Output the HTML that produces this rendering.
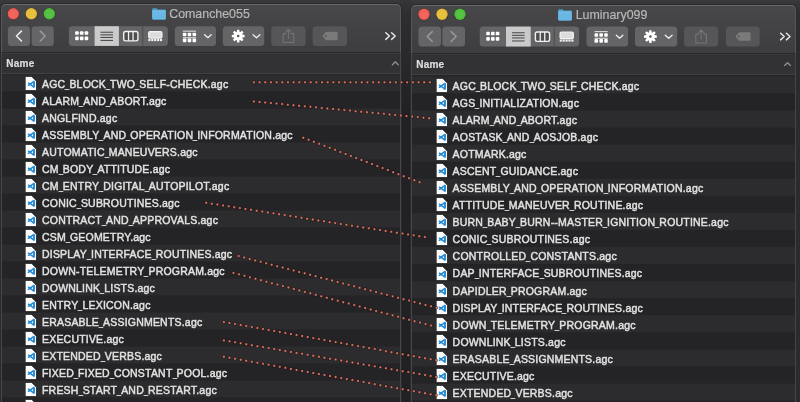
<!DOCTYPE html><html><head><meta charset="utf-8"><style>*{margin:0;padding:0;box-sizing:border-box}
html,body{width:800px;height:402px;overflow:hidden;background:#2a292b;font-family:"Liberation Sans",sans-serif;-webkit-font-smoothing:antialiased}
body{position:relative;will-change:transform}
.abs{position:absolute}
.t{font-size:10.5px;line-height:12px;letter-spacing:0.2px;color:#e2e2e2;white-space:nowrap;-webkit-text-stroke:0.45px #e2e2e2}
.name{font-size:10px;line-height:11px;font-weight:bold;color:#dedede;letter-spacing:0.25px;-webkit-text-stroke:0.2px #dedede;white-space:nowrap}
.t b{font-weight:normal;display:inline-block;transform:scaleX(.68);transform-origin:0 0;margin-right:-2px}
.title{font-size:12.4px;line-height:14px;color:#b8b8b8;-webkit-text-stroke:0.2px #b8b8b8;white-space:nowrap}
</style></head><body><div class="abs" style="left:0;top:0;width:800px;height:402px;background:linear-gradient(#3a393b 0px,#353436 4px,#2e2d30 14px,#2b2a2c 60px)"></div><div class="abs" style="left:400px;top:0;width:12px;height:402px;background:linear-gradient(#363537,#2e2d2f 14px,#2a292b 50px,#212023 110px)"></div><div class="abs" style="left:1px;top:4px;width:400px;height:408px;background:linear-gradient(#484749 0px,#3d3c3e 48px);border-radius:5px 5px 0 0;box-shadow:0 0 0 1px #2a292b"></div><div class="abs" style="left:1px;top:52px;width:400px;height:1px;background:#29282a"></div><div class="abs" style="left:1px;top:53px;width:400px;height:20px;background:#323133"></div><div class="abs" style="left:1px;top:73px;width:400px;height:1px;background:#403f41"></div><div class="abs" style="left:1px;top:53px;width:400px;height:1px;background:#39383a"></div><div class="abs" style="left:1px;top:74px;width:400px;height:402px;background:#242326"></div><svg class="abs" style="left:1px;top:0" width="400" height="402"><rect x="0" y="74.50" width="400" height="17" fill="#2c2b2d"/><rect x="0" y="108.50" width="400" height="17" fill="#2c2b2d"/><rect x="0" y="142.50" width="400" height="17" fill="#2c2b2d"/><rect x="0" y="176.50" width="400" height="17" fill="#2c2b2d"/><rect x="0" y="210.50" width="400" height="17" fill="#2c2b2d"/><rect x="0" y="244.50" width="400" height="17" fill="#2c2b2d"/><rect x="0" y="278.50" width="400" height="17" fill="#2c2b2d"/><rect x="0" y="312.50" width="400" height="17" fill="#2c2b2d"/><rect x="0" y="346.50" width="400" height="17" fill="#2c2b2d"/><rect x="0" y="380.50" width="400" height="17" fill="#2c2b2d"/></svg><div class="abs" style="left:25.3px;top:76.00px"><svg width="12" height="16" viewBox="0 0 12 16"><path d="M0.2 0.4H6.7L11.5 5.3V14.6H0.2Z" fill="#fbfbfb" stroke="#0a0a0a" stroke-width="0.7"/><path d="M8.6 5.6L3.5 9.3M8.6 10.9L3.5 7.2" stroke="#1f88d2" stroke-width="1.55" stroke-linecap="round"/><path d="M9.0 5.7V10.8" stroke="#2b90d8" stroke-width="2.0" stroke-linecap="round"/></svg></div><div class="abs t" style="left:42px;top:77.50px;font-size:10.5px">AGC<b>_</b>BLOCK<b>_</b>TWO<b>_</b>SELF-CHECK.agc</div><div class="abs" style="left:25.3px;top:93.00px"><svg width="12" height="16" viewBox="0 0 12 16"><path d="M0.2 0.4H6.7L11.5 5.3V14.6H0.2Z" fill="#fbfbfb" stroke="#0a0a0a" stroke-width="0.7"/><path d="M8.6 5.6L3.5 9.3M8.6 10.9L3.5 7.2" stroke="#1f88d2" stroke-width="1.55" stroke-linecap="round"/><path d="M9.0 5.7V10.8" stroke="#2b90d8" stroke-width="2.0" stroke-linecap="round"/></svg></div><div class="abs t" style="left:42px;top:94.50px;font-size:10.5px">ALARM<b>_</b>AND<b>_</b>ABORT.agc</div><div class="abs" style="left:25.3px;top:110.00px"><svg width="12" height="16" viewBox="0 0 12 16"><path d="M0.2 0.4H6.7L11.5 5.3V14.6H0.2Z" fill="#fbfbfb" stroke="#0a0a0a" stroke-width="0.7"/><path d="M8.6 5.6L3.5 9.3M8.6 10.9L3.5 7.2" stroke="#1f88d2" stroke-width="1.55" stroke-linecap="round"/><path d="M9.0 5.7V10.8" stroke="#2b90d8" stroke-width="2.0" stroke-linecap="round"/></svg></div><div class="abs t" style="left:42px;top:111.50px;font-size:10.5px">ANGLFIND.agc</div><div class="abs" style="left:25.3px;top:127.00px"><svg width="12" height="16" viewBox="0 0 12 16"><path d="M0.2 0.4H6.7L11.5 5.3V14.6H0.2Z" fill="#fbfbfb" stroke="#0a0a0a" stroke-width="0.7"/><path d="M8.6 5.6L3.5 9.3M8.6 10.9L3.5 7.2" stroke="#1f88d2" stroke-width="1.55" stroke-linecap="round"/><path d="M9.0 5.7V10.8" stroke="#2b90d8" stroke-width="2.0" stroke-linecap="round"/></svg></div><div class="abs t" style="left:42px;top:128.50px;font-size:10.5px">ASSEMBLY<b>_</b>AND<b>_</b>OPERATION<b>_</b>INFORMATION.agc</div><div class="abs" style="left:25.3px;top:144.00px"><svg width="12" height="16" viewBox="0 0 12 16"><path d="M0.2 0.4H6.7L11.5 5.3V14.6H0.2Z" fill="#fbfbfb" stroke="#0a0a0a" stroke-width="0.7"/><path d="M8.6 5.6L3.5 9.3M8.6 10.9L3.5 7.2" stroke="#1f88d2" stroke-width="1.55" stroke-linecap="round"/><path d="M9.0 5.7V10.8" stroke="#2b90d8" stroke-width="2.0" stroke-linecap="round"/></svg></div><div class="abs t" style="left:42px;top:145.50px;font-size:10.5px">AUTOMATIC<b>_</b>MANEUVERS.agc</div><div class="abs" style="left:25.3px;top:161.00px"><svg width="12" height="16" viewBox="0 0 12 16"><path d="M0.2 0.4H6.7L11.5 5.3V14.6H0.2Z" fill="#fbfbfb" stroke="#0a0a0a" stroke-width="0.7"/><path d="M8.6 5.6L3.5 9.3M8.6 10.9L3.5 7.2" stroke="#1f88d2" stroke-width="1.55" stroke-linecap="round"/><path d="M9.0 5.7V10.8" stroke="#2b90d8" stroke-width="2.0" stroke-linecap="round"/></svg></div><div class="abs t" style="left:42px;top:162.50px;font-size:10.5px">CM<b>_</b>BODY<b>_</b>ATTITUDE.agc</div><div class="abs" style="left:25.3px;top:178.00px"><svg width="12" height="16" viewBox="0 0 12 16"><path d="M0.2 0.4H6.7L11.5 5.3V14.6H0.2Z" fill="#fbfbfb" stroke="#0a0a0a" stroke-width="0.7"/><path d="M8.6 5.6L3.5 9.3M8.6 10.9L3.5 7.2" stroke="#1f88d2" stroke-width="1.55" stroke-linecap="round"/><path d="M9.0 5.7V10.8" stroke="#2b90d8" stroke-width="2.0" stroke-linecap="round"/></svg></div><div class="abs t" style="left:42px;top:179.50px;font-size:10.5px">CM<b>_</b>ENTRY<b>_</b>DIGITAL<b>_</b>AUTOPILOT.agc</div><div class="abs" style="left:25.3px;top:195.00px"><svg width="12" height="16" viewBox="0 0 12 16"><path d="M0.2 0.4H6.7L11.5 5.3V14.6H0.2Z" fill="#fbfbfb" stroke="#0a0a0a" stroke-width="0.7"/><path d="M8.6 5.6L3.5 9.3M8.6 10.9L3.5 7.2" stroke="#1f88d2" stroke-width="1.55" stroke-linecap="round"/><path d="M9.0 5.7V10.8" stroke="#2b90d8" stroke-width="2.0" stroke-linecap="round"/></svg></div><div class="abs t" style="left:42px;top:196.50px;font-size:10.5px">CONIC<b>_</b>SUBROUTINES.agc</div><div class="abs" style="left:25.3px;top:212.00px"><svg width="12" height="16" viewBox="0 0 12 16"><path d="M0.2 0.4H6.7L11.5 5.3V14.6H0.2Z" fill="#fbfbfb" stroke="#0a0a0a" stroke-width="0.7"/><path d="M8.6 5.6L3.5 9.3M8.6 10.9L3.5 7.2" stroke="#1f88d2" stroke-width="1.55" stroke-linecap="round"/><path d="M9.0 5.7V10.8" stroke="#2b90d8" stroke-width="2.0" stroke-linecap="round"/></svg></div><div class="abs t" style="left:42px;top:213.50px;font-size:10.5px">CONTRACT<b>_</b>AND<b>_</b>APPROVALS.agc</div><div class="abs" style="left:25.3px;top:229.00px"><svg width="12" height="16" viewBox="0 0 12 16"><path d="M0.2 0.4H6.7L11.5 5.3V14.6H0.2Z" fill="#fbfbfb" stroke="#0a0a0a" stroke-width="0.7"/><path d="M8.6 5.6L3.5 9.3M8.6 10.9L3.5 7.2" stroke="#1f88d2" stroke-width="1.55" stroke-linecap="round"/><path d="M9.0 5.7V10.8" stroke="#2b90d8" stroke-width="2.0" stroke-linecap="round"/></svg></div><div class="abs t" style="left:42px;top:230.50px;font-size:10.5px">CSM<b>_</b>GEOMETRY.agc</div><div class="abs" style="left:25.3px;top:246.00px"><svg width="12" height="16" viewBox="0 0 12 16"><path d="M0.2 0.4H6.7L11.5 5.3V14.6H0.2Z" fill="#fbfbfb" stroke="#0a0a0a" stroke-width="0.7"/><path d="M8.6 5.6L3.5 9.3M8.6 10.9L3.5 7.2" stroke="#1f88d2" stroke-width="1.55" stroke-linecap="round"/><path d="M9.0 5.7V10.8" stroke="#2b90d8" stroke-width="2.0" stroke-linecap="round"/></svg></div><div class="abs t" style="left:42px;top:247.50px;font-size:10.5px">DISPLAY<b>_</b>INTERFACE<b>_</b>ROUTINES.agc</div><div class="abs" style="left:25.3px;top:263.00px"><svg width="12" height="16" viewBox="0 0 12 16"><path d="M0.2 0.4H6.7L11.5 5.3V14.6H0.2Z" fill="#fbfbfb" stroke="#0a0a0a" stroke-width="0.7"/><path d="M8.6 5.6L3.5 9.3M8.6 10.9L3.5 7.2" stroke="#1f88d2" stroke-width="1.55" stroke-linecap="round"/><path d="M9.0 5.7V10.8" stroke="#2b90d8" stroke-width="2.0" stroke-linecap="round"/></svg></div><div class="abs t" style="left:42px;top:264.50px;font-size:10.5px">DOWN-TELEMETRY<b>_</b>PROGRAM.agc</div><div class="abs" style="left:25.3px;top:280.00px"><svg width="12" height="16" viewBox="0 0 12 16"><path d="M0.2 0.4H6.7L11.5 5.3V14.6H0.2Z" fill="#fbfbfb" stroke="#0a0a0a" stroke-width="0.7"/><path d="M8.6 5.6L3.5 9.3M8.6 10.9L3.5 7.2" stroke="#1f88d2" stroke-width="1.55" stroke-linecap="round"/><path d="M9.0 5.7V10.8" stroke="#2b90d8" stroke-width="2.0" stroke-linecap="round"/></svg></div><div class="abs t" style="left:42px;top:281.50px;font-size:10.5px">DOWNLINK<b>_</b>LISTS.agc</div><div class="abs" style="left:25.3px;top:297.00px"><svg width="12" height="16" viewBox="0 0 12 16"><path d="M0.2 0.4H6.7L11.5 5.3V14.6H0.2Z" fill="#fbfbfb" stroke="#0a0a0a" stroke-width="0.7"/><path d="M8.6 5.6L3.5 9.3M8.6 10.9L3.5 7.2" stroke="#1f88d2" stroke-width="1.55" stroke-linecap="round"/><path d="M9.0 5.7V10.8" stroke="#2b90d8" stroke-width="2.0" stroke-linecap="round"/></svg></div><div class="abs t" style="left:42px;top:298.50px;font-size:10.5px">ENTRY<b>_</b>LEXICON.agc</div><div class="abs" style="left:25.3px;top:314.00px"><svg width="12" height="16" viewBox="0 0 12 16"><path d="M0.2 0.4H6.7L11.5 5.3V14.6H0.2Z" fill="#fbfbfb" stroke="#0a0a0a" stroke-width="0.7"/><path d="M8.6 5.6L3.5 9.3M8.6 10.9L3.5 7.2" stroke="#1f88d2" stroke-width="1.55" stroke-linecap="round"/><path d="M9.0 5.7V10.8" stroke="#2b90d8" stroke-width="2.0" stroke-linecap="round"/></svg></div><div class="abs t" style="left:42px;top:315.50px;font-size:10.5px">ERASABLE<b>_</b>ASSIGNMENTS.agc</div><div class="abs" style="left:25.3px;top:331.00px"><svg width="12" height="16" viewBox="0 0 12 16"><path d="M0.2 0.4H6.7L11.5 5.3V14.6H0.2Z" fill="#fbfbfb" stroke="#0a0a0a" stroke-width="0.7"/><path d="M8.6 5.6L3.5 9.3M8.6 10.9L3.5 7.2" stroke="#1f88d2" stroke-width="1.55" stroke-linecap="round"/><path d="M9.0 5.7V10.8" stroke="#2b90d8" stroke-width="2.0" stroke-linecap="round"/></svg></div><div class="abs t" style="left:42px;top:332.50px;font-size:10.5px">EXECUTIVE.agc</div><div class="abs" style="left:25.3px;top:348.00px"><svg width="12" height="16" viewBox="0 0 12 16"><path d="M0.2 0.4H6.7L11.5 5.3V14.6H0.2Z" fill="#fbfbfb" stroke="#0a0a0a" stroke-width="0.7"/><path d="M8.6 5.6L3.5 9.3M8.6 10.9L3.5 7.2" stroke="#1f88d2" stroke-width="1.55" stroke-linecap="round"/><path d="M9.0 5.7V10.8" stroke="#2b90d8" stroke-width="2.0" stroke-linecap="round"/></svg></div><div class="abs t" style="left:42px;top:349.50px;font-size:10.5px">EXTENDED<b>_</b>VERBS.agc</div><div class="abs" style="left:25.3px;top:365.00px"><svg width="12" height="16" viewBox="0 0 12 16"><path d="M0.2 0.4H6.7L11.5 5.3V14.6H0.2Z" fill="#fbfbfb" stroke="#0a0a0a" stroke-width="0.7"/><path d="M8.6 5.6L3.5 9.3M8.6 10.9L3.5 7.2" stroke="#1f88d2" stroke-width="1.55" stroke-linecap="round"/><path d="M9.0 5.7V10.8" stroke="#2b90d8" stroke-width="2.0" stroke-linecap="round"/></svg></div><div class="abs t" style="left:42px;top:366.50px;font-size:10.5px">FIXED<b>_</b>FIXED<b>_</b>CONSTANT<b>_</b>POOL.agc</div><div class="abs" style="left:25.3px;top:382.00px"><svg width="12" height="16" viewBox="0 0 12 16"><path d="M0.2 0.4H6.7L11.5 5.3V14.6H0.2Z" fill="#fbfbfb" stroke="#0a0a0a" stroke-width="0.7"/><path d="M8.6 5.6L3.5 9.3M8.6 10.9L3.5 7.2" stroke="#1f88d2" stroke-width="1.55" stroke-linecap="round"/><path d="M9.0 5.7V10.8" stroke="#2b90d8" stroke-width="2.0" stroke-linecap="round"/></svg></div><div class="abs t" style="left:42px;top:383.50px;font-size:10.5px">FRESH<b>_</b>START<b>_</b>AND<b>_</b>RESTART.agc</div><div class="abs" style="left:25.3px;top:399.00px"><svg width="12" height="16" viewBox="0 0 12 16"><path d="M0.2 0.4H6.7L11.5 5.3V14.6H0.2Z" fill="#fbfbfb" stroke="#0a0a0a" stroke-width="0.7"/><path d="M8.6 5.6L3.5 9.3M8.6 10.9L3.5 7.2" stroke="#1f88d2" stroke-width="1.55" stroke-linecap="round"/><path d="M9.0 5.7V10.8" stroke="#2b90d8" stroke-width="2.0" stroke-linecap="round"/></svg></div><div class="abs t" style="left:42px;top:400.50px;font-size:10.5px">GIMBAL<b>_</b>LOCK<b>_</b>AVOIDANCE.agc</div><div class="abs name" style="left:6.3px;top:57.5px">Name</div><svg class="abs" style="left:0;top:0" width="800" height="30"><circle cx="13.3" cy="13.8" r="6.1" fill="rgba(20,18,20,0.45)"/><circle cx="13.3" cy="13.8" r="5.7" fill="#f05a54"/><circle cx="13.3" cy="14.100000000000001" r="4" fill="#f36d66" opacity="0.6"/><circle cx="31.3" cy="13.8" r="6.1" fill="rgba(20,18,20,0.45)"/><circle cx="31.3" cy="13.8" r="5.7" fill="#e6bb36"/><circle cx="31.3" cy="14.100000000000001" r="4" fill="#ebc449" opacity="0.6"/><circle cx="49.3" cy="13.8" r="6.1" fill="rgba(20,18,20,0.45)"/><circle cx="49.3" cy="13.8" r="5.7" fill="#4dbd3a"/><circle cx="49.3" cy="14.100000000000001" r="4" fill="#5cc64a" opacity="0.6"/></svg><svg class="abs" style="left:151.6px;top:8.1px" width="14" height="12" viewBox="0 0 14 12"><path d="M0.2 1.0Q0.2 0.2 1.0 0.2H4.6L5.8 1.4H13.0Q13.8 1.4 13.8 2.2V10.6Q13.8 11.4 13.0 11.4H1.0Q0.2 11.4 0.2 10.6Z" fill="#4d9dca"/><path d="M0.2 3.4Q0.2 2.5 1.0 2.5H13.0Q13.8 2.5 13.8 3.3V10.6Q13.8 11.4 13.0 11.4H1.0Q0.2 11.4 0.2 10.6Z" fill="#68b8e3"/><path d="M0.4 3.0H13.6" stroke="#86c9ee" stroke-width="0.6"/></svg><div class="abs title" style="left:169.2px;top:7px">Comanche055</div><svg class="abs" style="left:0;top:0" width="800" height="80"><rect x="7.9" y="26.2" width="22.1" height="19.7" rx="3.5" fill="#656466" /><rect x="31.6" y="26.2" width="22.199999999999996" height="19.7" rx="3.5" fill="#656466" /><path d="M21.45 31.15 L16.45 36.05 L21.45 40.949999999999996" fill="none" stroke="#eeeeee" stroke-width="1.5" stroke-linecap="round" stroke-linejoin="round"/><path d="M40.2 31.15 L45.2 36.05 L40.2 40.949999999999996" fill="none" stroke="#9a9a9a" stroke-width="1.5" stroke-linecap="round" stroke-linejoin="round"/><rect x="68.9" y="26.2" width="99.0" height="19.7" rx="3.5" fill="#656466" /><rect x="94.6" y="26.2" width="24.30000000000001" height="19.7" fill="#cacaca"/><rect x="142.2" y="26.2" width="1" height="19.7" fill="#4e4e4e"/><rect x="75.15" y="31.249999999999996" width="3.5999999999999943" height="3.599999999999998" rx="0.9" fill="#ffffff" /><rect x="79.9" y="31.249999999999996" width="3.5999999999999943" height="3.599999999999998" rx="0.9" fill="#ffffff" /><rect x="84.65" y="31.249999999999996" width="3.5999999999999943" height="3.599999999999998" rx="0.9" fill="#ffffff" /><rect x="75.15" y="36.55" width="3.5999999999999943" height="3.6000000000000014" rx="0.9" fill="#ffffff" /><rect x="79.9" y="36.55" width="3.5999999999999943" height="3.6000000000000014" rx="0.9" fill="#ffffff" /><rect x="84.65" y="36.55" width="3.5999999999999943" height="3.6000000000000014" rx="0.9" fill="#ffffff" /><rect x="100.45" y="31.7" width="12.6" height="1.1" fill="#505050"/><rect x="100.45" y="34.3" width="12.6" height="1.1" fill="#505050"/><rect x="100.45" y="36.9" width="12.6" height="1.1" fill="#505050"/><rect x="100.45" y="39.9" width="12.6" height="1.1" fill="#505050"/><rect x="123.70000000000002" y="31.449999999999996" width="14.2" height="9.4" rx="1.8" fill="#4e4e4e" stroke="#f2f2f2" stroke-width="1.4"/><rect x="127.9" y="31.449999999999996" width="1.3" height="9.4" fill="#f2f2f2"/><rect x="132.4" y="31.449999999999996" width="1.3" height="9.4" fill="#f2f2f2"/><rect x="148.70000000000002" y="31.65" width="13.2" height="6.4" rx="1.3" fill="#dcdcdc" stroke="#f2f2f2" stroke-width="1.3"/><rect x="148.3" y="38.949999999999996" width="2.2" height="2.2" fill="#f2f2f2"/><rect x="151.20000000000002" y="38.949999999999996" width="2.2" height="2.2" fill="#f2f2f2"/><rect x="154.10000000000002" y="38.949999999999996" width="2.2" height="2.2" fill="#f2f2f2"/><rect x="157.0" y="38.949999999999996" width="2.2" height="2.2" fill="#f2f2f2"/><rect x="159.9" y="38.949999999999996" width="2.2" height="2.2" fill="#f2f2f2"/><rect x="174.8" y="26.2" width="41.19999999999999" height="19.7" rx="3.5" fill="#656466" /><rect x="182.8" y="30.65" width="13.2" height="1" fill="#e8e8e8"/><rect x="182.8" y="37.25" width="13.2" height="1" fill="#e8e8e8"/><rect x="182.8" y="32.65" width="3.5999999999999943" height="3.6000000000000014" rx="0.9" fill="#ffffff" /><rect x="187.65" y="32.65" width="3.5999999999999943" height="3.6000000000000014" rx="0.9" fill="#ffffff" /><rect x="192.5" y="32.65" width="3.5999999999999943" height="3.6000000000000014" rx="0.9" fill="#ffffff" /><rect x="182.8" y="38.55" width="3.5999999999999943" height="3.6000000000000014" rx="0.9" fill="#ffffff" /><rect x="187.65" y="38.55" width="3.5999999999999943" height="3.6000000000000014" rx="0.9" fill="#ffffff" /><rect x="192.5" y="38.55" width="3.5999999999999943" height="3.6000000000000014" rx="0.9" fill="#ffffff" /><path d="M204.60000000000002 34.65 L207.9 37.65 L211.20000000000002 34.65" fill="none" stroke="#f0f0f0" stroke-width="1.3" stroke-linecap="round" stroke-linejoin="round"/><rect x="222.8" y="26.2" width="41.39999999999998" height="19.7" rx="3.5" fill="#656466" /><path d="M237.10 29.64 L239.30 29.64 L239.63 32.00 L240.05 32.17 L241.95 30.74 L243.51 32.30 L242.08 34.20 L242.25 34.62 L244.61 34.95 L244.61 37.15 L242.25 37.48 L242.08 37.90 L243.51 39.80 L241.95 41.36 L240.05 39.93 L239.63 40.10 L239.30 42.46 L237.10 42.46 L236.77 40.10 L236.35 39.93 L234.45 41.36 L232.89 39.80 L234.32 37.90 L234.15 37.48 L231.79 37.15 L231.79 34.95 L234.15 34.62 L234.32 34.20 L232.89 32.30 L234.45 30.74 L236.35 32.17 L236.77 32.00Z" fill="#ffffff"/><circle cx="238.20000000000002" cy="36.05" r="1.2" fill="#505050"/><path d="M253.10000000000002 34.75 L256.5 37.75 L259.90000000000003 34.75" fill="none" stroke="#f0f0f0" stroke-width="1.3" stroke-linecap="round" stroke-linejoin="round"/><rect x="271.2" y="26.2" width="34.400000000000034" height="19.7" rx="3.5" fill="#565557" /><path d="M286.0 33.65H283.09999999999997V42.449999999999996H293.7V33.65H290.79999999999995" fill="none" stroke="#747474" stroke-width="1.1" stroke-linejoin="round"/><path d="M288.4 29.449999999999996V38.55 M285.79999999999995 32.05L288.4 29.449999999999996L291.0 32.05" fill="none" stroke="#747474" stroke-width="1.1" stroke-linecap="round" stroke-linejoin="round"/><rect x="312.6" y="26.2" width="34.39999999999998" height="19.7" rx="3.5" fill="#565557" /><path d="M322.3 36.05L326.0 31.849999999999998H336.6Q337.6 31.849999999999998 337.6 32.849999999999994V39.25Q337.6 40.25 336.6 40.25H326.0Z" fill="#7a7a7a"/><circle cx="325.8" cy="36.05" r="1" fill="#565557"/><path d="M385.8 32.75 L389.40000000000003 36.05 L385.8 39.349999999999994" fill="none" stroke="#e6e6e6" stroke-width="1.5" stroke-linecap="round" stroke-linejoin="round"/><path d="M391.6 32.75 L395.20000000000005 36.05 L391.6 39.349999999999994" fill="none" stroke="#e6e6e6" stroke-width="1.5" stroke-linecap="round" stroke-linejoin="round"/><path d="M392.40000000000003 64.7 L395.3 61.800000000000004 L398.2 64.7" fill="none" stroke="#8c8b8d" stroke-width="1.4" stroke-linecap="round" stroke-linejoin="round"/></svg><div class="abs" style="left:1px;top:4px;width:400px;height:48px;border:1px solid #58575a;border-top-color:#67666a;border-bottom:none;border-radius:5px 5px 0 0"></div><div class="abs" style="left:1px;top:52px;width:400px;height:360px;border-left:1px solid #464548;border-right:1px solid #464548"></div><div class="abs" style="left:411px;top:4.5px;width:385px;height:407.5px;background:linear-gradient(#484749 0px,#3d3c3e 48px);border-radius:5px 5px 0 0;box-shadow:0 0 0 1px #2a292b"></div><div class="abs" style="left:411px;top:53.3px;width:385px;height:1px;background:#29282a"></div><div class="abs" style="left:411px;top:54.3px;width:385px;height:19.700000000000003px;background:#323133"></div><div class="abs" style="left:411px;top:74px;width:385px;height:1px;background:#403f41"></div><div class="abs" style="left:411px;top:54.3px;width:385px;height:1px;background:#39383a"></div><div class="abs" style="left:411px;top:75px;width:385px;height:402px;background:#242326"></div><svg class="abs" style="left:411px;top:0" width="385" height="402"><rect x="0" y="76.40" width="385" height="17.06" fill="#2c2b2d"/><rect x="0" y="110.52" width="385" height="17.06" fill="#2c2b2d"/><rect x="0" y="144.64" width="385" height="17.06" fill="#2c2b2d"/><rect x="0" y="178.76" width="385" height="17.06" fill="#2c2b2d"/><rect x="0" y="212.88" width="385" height="17.06" fill="#2c2b2d"/><rect x="0" y="247.00" width="385" height="17.06" fill="#2c2b2d"/><rect x="0" y="281.12" width="385" height="17.06" fill="#2c2b2d"/><rect x="0" y="315.24" width="385" height="17.06" fill="#2c2b2d"/><rect x="0" y="349.36" width="385" height="17.06" fill="#2c2b2d"/><rect x="0" y="383.48" width="385" height="17.06" fill="#2c2b2d"/></svg><div class="abs" style="left:435.8px;top:77.90px"><svg width="12" height="16" viewBox="0 0 12 16"><path d="M0.2 0.4H6.7L11.5 5.3V14.6H0.2Z" fill="#fbfbfb" stroke="#0a0a0a" stroke-width="0.7"/><path d="M8.6 5.6L3.5 9.3M8.6 10.9L3.5 7.2" stroke="#1f88d2" stroke-width="1.55" stroke-linecap="round"/><path d="M9.0 5.7V10.8" stroke="#2b90d8" stroke-width="2.0" stroke-linecap="round"/></svg></div><div class="abs t" style="left:452.6px;top:79.80px;font-size:10.5px">AGC<b>_</b>BLOCK<b>_</b>TWO<b>_</b>SELF<b>_</b>CHECK.agc</div><div class="abs" style="left:435.8px;top:94.96px"><svg width="12" height="16" viewBox="0 0 12 16"><path d="M0.2 0.4H6.7L11.5 5.3V14.6H0.2Z" fill="#fbfbfb" stroke="#0a0a0a" stroke-width="0.7"/><path d="M8.6 5.6L3.5 9.3M8.6 10.9L3.5 7.2" stroke="#1f88d2" stroke-width="1.55" stroke-linecap="round"/><path d="M9.0 5.7V10.8" stroke="#2b90d8" stroke-width="2.0" stroke-linecap="round"/></svg></div><div class="abs t" style="left:452.6px;top:96.86px;font-size:10.5px">AGS<b>_</b>INITIALIZATION.agc</div><div class="abs" style="left:435.8px;top:112.02px"><svg width="12" height="16" viewBox="0 0 12 16"><path d="M0.2 0.4H6.7L11.5 5.3V14.6H0.2Z" fill="#fbfbfb" stroke="#0a0a0a" stroke-width="0.7"/><path d="M8.6 5.6L3.5 9.3M8.6 10.9L3.5 7.2" stroke="#1f88d2" stroke-width="1.55" stroke-linecap="round"/><path d="M9.0 5.7V10.8" stroke="#2b90d8" stroke-width="2.0" stroke-linecap="round"/></svg></div><div class="abs t" style="left:452.6px;top:113.92px;font-size:10.5px">ALARM<b>_</b>AND<b>_</b>ABORT.agc</div><div class="abs" style="left:435.8px;top:129.08px"><svg width="12" height="16" viewBox="0 0 12 16"><path d="M0.2 0.4H6.7L11.5 5.3V14.6H0.2Z" fill="#fbfbfb" stroke="#0a0a0a" stroke-width="0.7"/><path d="M8.6 5.6L3.5 9.3M8.6 10.9L3.5 7.2" stroke="#1f88d2" stroke-width="1.55" stroke-linecap="round"/><path d="M9.0 5.7V10.8" stroke="#2b90d8" stroke-width="2.0" stroke-linecap="round"/></svg></div><div class="abs t" style="left:452.6px;top:130.98px;font-size:10.5px">AOSTASK<b>_</b>AND<b>_</b>AOSJOB.agc</div><div class="abs" style="left:435.8px;top:146.14px"><svg width="12" height="16" viewBox="0 0 12 16"><path d="M0.2 0.4H6.7L11.5 5.3V14.6H0.2Z" fill="#fbfbfb" stroke="#0a0a0a" stroke-width="0.7"/><path d="M8.6 5.6L3.5 9.3M8.6 10.9L3.5 7.2" stroke="#1f88d2" stroke-width="1.55" stroke-linecap="round"/><path d="M9.0 5.7V10.8" stroke="#2b90d8" stroke-width="2.0" stroke-linecap="round"/></svg></div><div class="abs t" style="left:452.6px;top:148.04px;font-size:10.5px">AOTMARK.agc</div><div class="abs" style="left:435.8px;top:163.20px"><svg width="12" height="16" viewBox="0 0 12 16"><path d="M0.2 0.4H6.7L11.5 5.3V14.6H0.2Z" fill="#fbfbfb" stroke="#0a0a0a" stroke-width="0.7"/><path d="M8.6 5.6L3.5 9.3M8.6 10.9L3.5 7.2" stroke="#1f88d2" stroke-width="1.55" stroke-linecap="round"/><path d="M9.0 5.7V10.8" stroke="#2b90d8" stroke-width="2.0" stroke-linecap="round"/></svg></div><div class="abs t" style="left:452.6px;top:165.10px;font-size:10.5px">ASCENT<b>_</b>GUIDANCE.agc</div><div class="abs" style="left:435.8px;top:180.26px"><svg width="12" height="16" viewBox="0 0 12 16"><path d="M0.2 0.4H6.7L11.5 5.3V14.6H0.2Z" fill="#fbfbfb" stroke="#0a0a0a" stroke-width="0.7"/><path d="M8.6 5.6L3.5 9.3M8.6 10.9L3.5 7.2" stroke="#1f88d2" stroke-width="1.55" stroke-linecap="round"/><path d="M9.0 5.7V10.8" stroke="#2b90d8" stroke-width="2.0" stroke-linecap="round"/></svg></div><div class="abs t" style="left:452.6px;top:182.16px;font-size:10.5px">ASSEMBLY<b>_</b>AND<b>_</b>OPERATION<b>_</b>INFORMATION.agc</div><div class="abs" style="left:435.8px;top:197.32px"><svg width="12" height="16" viewBox="0 0 12 16"><path d="M0.2 0.4H6.7L11.5 5.3V14.6H0.2Z" fill="#fbfbfb" stroke="#0a0a0a" stroke-width="0.7"/><path d="M8.6 5.6L3.5 9.3M8.6 10.9L3.5 7.2" stroke="#1f88d2" stroke-width="1.55" stroke-linecap="round"/><path d="M9.0 5.7V10.8" stroke="#2b90d8" stroke-width="2.0" stroke-linecap="round"/></svg></div><div class="abs t" style="left:452.6px;top:199.22px;font-size:10.5px">ATTITUDE<b>_</b>MANEUVER<b>_</b>ROUTINE.agc</div><div class="abs" style="left:435.8px;top:214.38px"><svg width="12" height="16" viewBox="0 0 12 16"><path d="M0.2 0.4H6.7L11.5 5.3V14.6H0.2Z" fill="#fbfbfb" stroke="#0a0a0a" stroke-width="0.7"/><path d="M8.6 5.6L3.5 9.3M8.6 10.9L3.5 7.2" stroke="#1f88d2" stroke-width="1.55" stroke-linecap="round"/><path d="M9.0 5.7V10.8" stroke="#2b90d8" stroke-width="2.0" stroke-linecap="round"/></svg></div><div class="abs t" style="left:452.6px;top:216.28px;font-size:10.5px">BURN<b>_</b>BABY<b>_</b>BURN--MASTER<b>_</b>IGNITION<b>_</b>ROUTINE.agc</div><div class="abs" style="left:435.8px;top:231.44px"><svg width="12" height="16" viewBox="0 0 12 16"><path d="M0.2 0.4H6.7L11.5 5.3V14.6H0.2Z" fill="#fbfbfb" stroke="#0a0a0a" stroke-width="0.7"/><path d="M8.6 5.6L3.5 9.3M8.6 10.9L3.5 7.2" stroke="#1f88d2" stroke-width="1.55" stroke-linecap="round"/><path d="M9.0 5.7V10.8" stroke="#2b90d8" stroke-width="2.0" stroke-linecap="round"/></svg></div><div class="abs t" style="left:452.6px;top:233.34px;font-size:10.5px">CONIC<b>_</b>SUBROUTINES.agc</div><div class="abs" style="left:435.8px;top:248.50px"><svg width="12" height="16" viewBox="0 0 12 16"><path d="M0.2 0.4H6.7L11.5 5.3V14.6H0.2Z" fill="#fbfbfb" stroke="#0a0a0a" stroke-width="0.7"/><path d="M8.6 5.6L3.5 9.3M8.6 10.9L3.5 7.2" stroke="#1f88d2" stroke-width="1.55" stroke-linecap="round"/><path d="M9.0 5.7V10.8" stroke="#2b90d8" stroke-width="2.0" stroke-linecap="round"/></svg></div><div class="abs t" style="left:452.6px;top:250.40px;font-size:10.5px">CONTROLLED<b>_</b>CONSTANTS.agc</div><div class="abs" style="left:435.8px;top:265.56px"><svg width="12" height="16" viewBox="0 0 12 16"><path d="M0.2 0.4H6.7L11.5 5.3V14.6H0.2Z" fill="#fbfbfb" stroke="#0a0a0a" stroke-width="0.7"/><path d="M8.6 5.6L3.5 9.3M8.6 10.9L3.5 7.2" stroke="#1f88d2" stroke-width="1.55" stroke-linecap="round"/><path d="M9.0 5.7V10.8" stroke="#2b90d8" stroke-width="2.0" stroke-linecap="round"/></svg></div><div class="abs t" style="left:452.6px;top:267.46px;font-size:10.5px">DAP<b>_</b>INTERFACE<b>_</b>SUBROUTINES.agc</div><div class="abs" style="left:435.8px;top:282.62px"><svg width="12" height="16" viewBox="0 0 12 16"><path d="M0.2 0.4H6.7L11.5 5.3V14.6H0.2Z" fill="#fbfbfb" stroke="#0a0a0a" stroke-width="0.7"/><path d="M8.6 5.6L3.5 9.3M8.6 10.9L3.5 7.2" stroke="#1f88d2" stroke-width="1.55" stroke-linecap="round"/><path d="M9.0 5.7V10.8" stroke="#2b90d8" stroke-width="2.0" stroke-linecap="round"/></svg></div><div class="abs t" style="left:452.6px;top:284.52px;font-size:10.5px">DAPIDLER<b>_</b>PROGRAM.agc</div><div class="abs" style="left:435.8px;top:299.68px"><svg width="12" height="16" viewBox="0 0 12 16"><path d="M0.2 0.4H6.7L11.5 5.3V14.6H0.2Z" fill="#fbfbfb" stroke="#0a0a0a" stroke-width="0.7"/><path d="M8.6 5.6L3.5 9.3M8.6 10.9L3.5 7.2" stroke="#1f88d2" stroke-width="1.55" stroke-linecap="round"/><path d="M9.0 5.7V10.8" stroke="#2b90d8" stroke-width="2.0" stroke-linecap="round"/></svg></div><div class="abs t" style="left:452.6px;top:301.58px;font-size:10.5px">DISPLAY<b>_</b>INTERFACE<b>_</b>ROUTINES.agc</div><div class="abs" style="left:435.8px;top:316.74px"><svg width="12" height="16" viewBox="0 0 12 16"><path d="M0.2 0.4H6.7L11.5 5.3V14.6H0.2Z" fill="#fbfbfb" stroke="#0a0a0a" stroke-width="0.7"/><path d="M8.6 5.6L3.5 9.3M8.6 10.9L3.5 7.2" stroke="#1f88d2" stroke-width="1.55" stroke-linecap="round"/><path d="M9.0 5.7V10.8" stroke="#2b90d8" stroke-width="2.0" stroke-linecap="round"/></svg></div><div class="abs t" style="left:452.6px;top:318.64px;font-size:10.5px">DOWN<b>_</b>TELEMETRY<b>_</b>PROGRAM.agc</div><div class="abs" style="left:435.8px;top:333.80px"><svg width="12" height="16" viewBox="0 0 12 16"><path d="M0.2 0.4H6.7L11.5 5.3V14.6H0.2Z" fill="#fbfbfb" stroke="#0a0a0a" stroke-width="0.7"/><path d="M8.6 5.6L3.5 9.3M8.6 10.9L3.5 7.2" stroke="#1f88d2" stroke-width="1.55" stroke-linecap="round"/><path d="M9.0 5.7V10.8" stroke="#2b90d8" stroke-width="2.0" stroke-linecap="round"/></svg></div><div class="abs t" style="left:452.6px;top:335.70px;font-size:10.5px">DOWNLINK<b>_</b>LISTS.agc</div><div class="abs" style="left:435.8px;top:350.86px"><svg width="12" height="16" viewBox="0 0 12 16"><path d="M0.2 0.4H6.7L11.5 5.3V14.6H0.2Z" fill="#fbfbfb" stroke="#0a0a0a" stroke-width="0.7"/><path d="M8.6 5.6L3.5 9.3M8.6 10.9L3.5 7.2" stroke="#1f88d2" stroke-width="1.55" stroke-linecap="round"/><path d="M9.0 5.7V10.8" stroke="#2b90d8" stroke-width="2.0" stroke-linecap="round"/></svg></div><div class="abs t" style="left:452.6px;top:352.76px;font-size:10.5px">ERASABLE<b>_</b>ASSIGNMENTS.agc</div><div class="abs" style="left:435.8px;top:367.92px"><svg width="12" height="16" viewBox="0 0 12 16"><path d="M0.2 0.4H6.7L11.5 5.3V14.6H0.2Z" fill="#fbfbfb" stroke="#0a0a0a" stroke-width="0.7"/><path d="M8.6 5.6L3.5 9.3M8.6 10.9L3.5 7.2" stroke="#1f88d2" stroke-width="1.55" stroke-linecap="round"/><path d="M9.0 5.7V10.8" stroke="#2b90d8" stroke-width="2.0" stroke-linecap="round"/></svg></div><div class="abs t" style="left:452.6px;top:369.82px;font-size:10.5px">EXECUTIVE.agc</div><div class="abs" style="left:435.8px;top:384.98px"><svg width="12" height="16" viewBox="0 0 12 16"><path d="M0.2 0.4H6.7L11.5 5.3V14.6H0.2Z" fill="#fbfbfb" stroke="#0a0a0a" stroke-width="0.7"/><path d="M8.6 5.6L3.5 9.3M8.6 10.9L3.5 7.2" stroke="#1f88d2" stroke-width="1.55" stroke-linecap="round"/><path d="M9.0 5.7V10.8" stroke="#2b90d8" stroke-width="2.0" stroke-linecap="round"/></svg></div><div class="abs t" style="left:452.6px;top:386.88px;font-size:10.5px">EXTENDED<b>_</b>VERBS.agc</div><div class="abs" style="left:435.8px;top:402.04px"><svg width="12" height="16" viewBox="0 0 12 16"><path d="M0.2 0.4H6.7L11.5 5.3V14.6H0.2Z" fill="#fbfbfb" stroke="#0a0a0a" stroke-width="0.7"/><path d="M8.6 5.6L3.5 9.3M8.6 10.9L3.5 7.2" stroke="#1f88d2" stroke-width="1.55" stroke-linecap="round"/><path d="M9.0 5.7V10.8" stroke="#2b90d8" stroke-width="2.0" stroke-linecap="round"/></svg></div><div class="abs t" style="left:452.6px;top:403.94px;font-size:10.5px">EXTENDED<b>_</b>VERBS<b>_</b>FOR<b>_</b>MAGIC.agc</div><div class="abs name" style="left:416.2px;top:58.5px">Name</div><svg class="abs" style="left:0;top:0" width="800" height="30"><circle cx="424" cy="14.2" r="6.1" fill="rgba(20,18,20,0.45)"/><circle cx="424" cy="14.2" r="5.7" fill="#f05a54"/><circle cx="424" cy="14.5" r="4" fill="#f36d66" opacity="0.6"/><circle cx="442" cy="14.2" r="6.1" fill="rgba(20,18,20,0.45)"/><circle cx="442" cy="14.2" r="5.7" fill="#e6bb36"/><circle cx="442" cy="14.5" r="4" fill="#ebc449" opacity="0.6"/><circle cx="460" cy="14.2" r="6.1" fill="rgba(20,18,20,0.45)"/><circle cx="460" cy="14.2" r="5.7" fill="#4dbd3a"/><circle cx="460" cy="14.5" r="4" fill="#5cc64a" opacity="0.6"/></svg><svg class="abs" style="left:558.1px;top:8.6px" width="14" height="12" viewBox="0 0 14 12"><path d="M0.2 1.0Q0.2 0.2 1.0 0.2H4.6L5.8 1.4H13.0Q13.8 1.4 13.8 2.2V10.6Q13.8 11.4 13.0 11.4H1.0Q0.2 11.4 0.2 10.6Z" fill="#4d9dca"/><path d="M0.2 3.4Q0.2 2.5 1.0 2.5H13.0Q13.8 2.5 13.8 3.3V10.6Q13.8 11.4 13.0 11.4H1.0Q0.2 11.4 0.2 10.6Z" fill="#68b8e3"/><path d="M0.4 3.0H13.6" stroke="#86c9ee" stroke-width="0.6"/></svg><div class="abs title" style="left:575.7px;top:7.5px">Luminary099</div><svg class="abs" style="left:0;top:0" width="800" height="80"><rect x="418.5" y="26.6" width="22.5" height="19.9" rx="3.5" fill="#656466" /><rect x="442.3" y="26.6" width="22.69999999999999" height="19.9" rx="3.5" fill="#656466" /><path d="M432.25 31.65 L427.25 36.55 L432.25 41.449999999999996" fill="none" stroke="#9a9a9a" stroke-width="1.5" stroke-linecap="round" stroke-linejoin="round"/><path d="M451.15 31.65 L456.15 36.55 L451.15 41.449999999999996" fill="none" stroke="#9a9a9a" stroke-width="1.5" stroke-linecap="round" stroke-linejoin="round"/><rect x="479.7" y="26.6" width="99.40000000000003" height="19.9" rx="3.5" fill="#656466" /><rect x="506" y="26.6" width="24.700000000000045" height="19.9" fill="#cacaca"/><rect x="553.8" y="26.6" width="1" height="19.9" fill="#4e4e4e"/><rect x="486.25" y="31.749999999999996" width="3.6000000000000227" height="3.599999999999998" rx="0.9" fill="#ffffff" /><rect x="491.0" y="31.749999999999996" width="3.6000000000000227" height="3.599999999999998" rx="0.9" fill="#ffffff" /><rect x="495.75" y="31.749999999999996" width="3.6000000000000227" height="3.599999999999998" rx="0.9" fill="#ffffff" /><rect x="486.25" y="37.05" width="3.6000000000000227" height="3.6000000000000014" rx="0.9" fill="#ffffff" /><rect x="491.0" y="37.05" width="3.6000000000000227" height="3.6000000000000014" rx="0.9" fill="#ffffff" /><rect x="495.75" y="37.05" width="3.6000000000000227" height="3.6000000000000014" rx="0.9" fill="#ffffff" /><rect x="512.0500000000001" y="32.2" width="12.6" height="1.1" fill="#505050"/><rect x="512.0500000000001" y="34.8" width="12.6" height="1.1" fill="#505050"/><rect x="512.0500000000001" y="37.4" width="12.6" height="1.1" fill="#505050"/><rect x="512.0500000000001" y="40.4" width="12.6" height="1.1" fill="#505050"/><rect x="535.4" y="31.949999999999996" width="14.2" height="9.4" rx="1.8" fill="#4e4e4e" stroke="#f2f2f2" stroke-width="1.4"/><rect x="539.6" y="31.949999999999996" width="1.3" height="9.4" fill="#f2f2f2"/><rect x="544.1" y="31.949999999999996" width="1.3" height="9.4" fill="#f2f2f2"/><rect x="560.1" y="32.15" width="13.2" height="6.4" rx="1.3" fill="#dcdcdc" stroke="#f2f2f2" stroke-width="1.3"/><rect x="559.7" y="39.449999999999996" width="2.2" height="2.2" fill="#f2f2f2"/><rect x="562.6" y="39.449999999999996" width="2.2" height="2.2" fill="#f2f2f2"/><rect x="565.5" y="39.449999999999996" width="2.2" height="2.2" fill="#f2f2f2"/><rect x="568.4000000000001" y="39.449999999999996" width="2.2" height="2.2" fill="#f2f2f2"/><rect x="571.3000000000001" y="39.449999999999996" width="2.2" height="2.2" fill="#f2f2f2"/><rect x="586.5" y="26.6" width="41.60000000000002" height="19.9" rx="3.5" fill="#656466" /><rect x="594.5" y="31.15" width="13.2" height="1" fill="#e8e8e8"/><rect x="594.5" y="37.75" width="13.2" height="1" fill="#e8e8e8"/><rect x="594.5" y="33.15" width="3.6000000000000227" height="3.6000000000000014" rx="0.9" fill="#ffffff" /><rect x="599.35" y="33.15" width="3.6000000000000227" height="3.6000000000000014" rx="0.9" fill="#ffffff" /><rect x="604.2" y="33.15" width="3.6000000000000227" height="3.6000000000000014" rx="0.9" fill="#ffffff" /><rect x="594.5" y="39.05" width="3.6000000000000227" height="3.6000000000000014" rx="0.9" fill="#ffffff" /><rect x="599.35" y="39.05" width="3.6000000000000227" height="3.6000000000000014" rx="0.9" fill="#ffffff" /><rect x="604.2" y="39.05" width="3.6000000000000227" height="3.6000000000000014" rx="0.9" fill="#ffffff" /><path d="M616.3 35.15 L619.6 38.15 L622.9 35.15" fill="none" stroke="#f0f0f0" stroke-width="1.3" stroke-linecap="round" stroke-linejoin="round"/><rect x="635" y="26.6" width="42.200000000000045" height="19.9" rx="3.5" fill="#656466" /><path d="M649.30 30.14 L651.50 30.14 L651.83 32.50 L652.25 32.67 L654.15 31.24 L655.71 32.80 L654.28 34.70 L654.45 35.12 L656.81 35.45 L656.81 37.65 L654.45 37.98 L654.28 38.40 L655.71 40.30 L654.15 41.86 L652.25 40.43 L651.83 40.60 L651.50 42.96 L649.30 42.96 L648.97 40.60 L648.55 40.43 L646.65 41.86 L645.09 40.30 L646.52 38.40 L646.35 37.98 L643.99 37.65 L643.99 35.45 L646.35 35.12 L646.52 34.70 L645.09 32.80 L646.65 31.24 L648.55 32.67 L648.97 32.50Z" fill="#ffffff"/><circle cx="650.4" cy="36.55" r="1.2" fill="#505050"/><path d="M665.3 35.25 L668.7 38.25 L672.1 35.25" fill="none" stroke="#f0f0f0" stroke-width="1.3" stroke-linecap="round" stroke-linejoin="round"/><rect x="684.1" y="26.6" width="34.10000000000002" height="19.9" rx="3.5" fill="#565557" /><path d="M698.7500000000001 34.15H695.8500000000001V42.949999999999996H706.45V34.15H703.5500000000001" fill="none" stroke="#747474" stroke-width="1.1" stroke-linejoin="round"/><path d="M701.1500000000001 29.949999999999996V39.05 M698.5500000000001 32.55L701.1500000000001 29.949999999999996L703.7500000000001 32.55" fill="none" stroke="#747474" stroke-width="1.1" stroke-linecap="round" stroke-linejoin="round"/><rect x="725.9" y="26.6" width="33.80000000000007" height="19.9" rx="3.5" fill="#565557" /><path d="M735.3 36.55L739.0 32.349999999999994H749.5999999999999Q750.5999999999999 32.349999999999994 750.5999999999999 33.349999999999994V39.75Q750.5999999999999 40.75 749.5999999999999 40.75H739.0Z" fill="#7a7a7a"/><circle cx="738.8" cy="36.55" r="1" fill="#565557"/><path d="M780.6 33.25 L784.2 36.55 L780.6 39.849999999999994" fill="none" stroke="#e6e6e6" stroke-width="1.5" stroke-linecap="round" stroke-linejoin="round"/><path d="M786.4 33.25 L790.0 36.55 L786.4 39.849999999999994" fill="none" stroke="#e6e6e6" stroke-width="1.5" stroke-linecap="round" stroke-linejoin="round"/><path d="M784.6 65.6 L787.5 62.7 L790.4 65.6" fill="none" stroke="#8c8b8d" stroke-width="1.4" stroke-linecap="round" stroke-linejoin="round"/></svg><div class="abs" style="left:411px;top:4.5px;width:385px;height:48.8px;border:1px solid #58575a;border-top-color:#67666a;border-bottom:none;border-radius:5px 5px 0 0"></div><div class="abs" style="left:411px;top:53.3px;width:385px;height:358.7px;border-left:1px solid #464548;border-right:1px solid #464548"></div><svg class="abs" style="left:0;top:0" width="800" height="402"><line x1="253.9" y1="82.3" x2="429.9" y2="82.3" stroke="rgba(15,10,12,0.55)" stroke-width="3.6" stroke-linecap="round" stroke-dasharray="0 5.6774"/><line x1="253.9" y1="82.3" x2="429.9" y2="82.3" stroke="#b05644" stroke-width="2.5" stroke-linecap="round" stroke-dasharray="0 5.6774"/><line x1="253.9" y1="82.3" x2="429.9" y2="82.3" stroke="#d88878" stroke-width="1.3" stroke-linecap="round" stroke-dasharray="0 5.6774"/><line x1="253.9" y1="101.4" x2="429.1" y2="118.2" stroke="rgba(15,10,12,0.55)" stroke-width="3.6" stroke-linecap="round" stroke-dasharray="0 5.6775"/><line x1="253.9" y1="101.4" x2="429.1" y2="118.2" stroke="#b05644" stroke-width="2.5" stroke-linecap="round" stroke-dasharray="0 5.6775"/><line x1="253.9" y1="101.4" x2="429.1" y2="118.2" stroke="#d88878" stroke-width="1.3" stroke-linecap="round" stroke-dasharray="0 5.6775"/><line x1="303.3" y1="137.7" x2="424.9" y2="184.3" stroke="rgba(15,10,12,0.55)" stroke-width="3.6" stroke-linecap="round" stroke-dasharray="0 5.6619"/><line x1="303.3" y1="137.7" x2="424.9" y2="184.3" stroke="#b05644" stroke-width="2.5" stroke-linecap="round" stroke-dasharray="0 5.6619"/><line x1="303.3" y1="137.7" x2="424.9" y2="184.3" stroke="#d88878" stroke-width="1.3" stroke-linecap="round" stroke-dasharray="0 5.6619"/><line x1="206.2" y1="202.8" x2="424.9" y2="237.1" stroke="rgba(15,10,12,0.55)" stroke-width="3.6" stroke-linecap="round" stroke-dasharray="0 5.6762"/><line x1="206.2" y1="202.8" x2="424.9" y2="237.1" stroke="#b05644" stroke-width="2.5" stroke-linecap="round" stroke-dasharray="0 5.6762"/><line x1="206.2" y1="202.8" x2="424.9" y2="237.1" stroke="#d88878" stroke-width="1.3" stroke-linecap="round" stroke-dasharray="0 5.6762"/><line x1="238.7" y1="256.1" x2="436.5" y2="307.8" stroke="rgba(15,10,12,0.55)" stroke-width="3.6" stroke-linecap="round" stroke-dasharray="0 5.6790"/><line x1="238.7" y1="256.1" x2="436.5" y2="307.8" stroke="#b05644" stroke-width="2.5" stroke-linecap="round" stroke-dasharray="0 5.6790"/><line x1="238.7" y1="256.1" x2="436.5" y2="307.8" stroke="#d88878" stroke-width="1.3" stroke-linecap="round" stroke-dasharray="0 5.6790"/><line x1="233.5" y1="272.9" x2="436.5" y2="327" stroke="rgba(15,10,12,0.55)" stroke-width="3.6" stroke-linecap="round" stroke-dasharray="0 5.6780"/><line x1="233.5" y1="272.9" x2="436.5" y2="327" stroke="#b05644" stroke-width="2.5" stroke-linecap="round" stroke-dasharray="0 5.6780"/><line x1="233.5" y1="272.9" x2="436.5" y2="327" stroke="#d88878" stroke-width="1.3" stroke-linecap="round" stroke-dasharray="0 5.6780"/><line x1="223.9" y1="321.9" x2="436.2" y2="360.2" stroke="rgba(15,10,12,0.55)" stroke-width="3.6" stroke-linecap="round" stroke-dasharray="0 5.6770"/><line x1="223.9" y1="321.9" x2="436.2" y2="360.2" stroke="#b05644" stroke-width="2.5" stroke-linecap="round" stroke-dasharray="0 5.6770"/><line x1="223.9" y1="321.9" x2="436.2" y2="360.2" stroke="#d88878" stroke-width="1.3" stroke-linecap="round" stroke-dasharray="0 5.6770"/><line x1="223.9" y1="340.4" x2="436.2" y2="376.9" stroke="rgba(15,10,12,0.55)" stroke-width="3.6" stroke-linecap="round" stroke-dasharray="0 5.6688"/><line x1="223.9" y1="340.4" x2="436.2" y2="376.9" stroke="#b05644" stroke-width="2.5" stroke-linecap="round" stroke-dasharray="0 5.6688"/><line x1="223.9" y1="340.4" x2="436.2" y2="376.9" stroke="#d88878" stroke-width="1.3" stroke-linecap="round" stroke-dasharray="0 5.6688"/><line x1="223.9" y1="356.7" x2="436.2" y2="395.3" stroke="rgba(15,10,12,0.55)" stroke-width="3.6" stroke-linecap="round" stroke-dasharray="0 5.6784"/><line x1="223.9" y1="356.7" x2="436.2" y2="395.3" stroke="#b05644" stroke-width="2.5" stroke-linecap="round" stroke-dasharray="0 5.6784"/><line x1="223.9" y1="356.7" x2="436.2" y2="395.3" stroke="#d88878" stroke-width="1.3" stroke-linecap="round" stroke-dasharray="0 5.6784"/></svg></body></html>
